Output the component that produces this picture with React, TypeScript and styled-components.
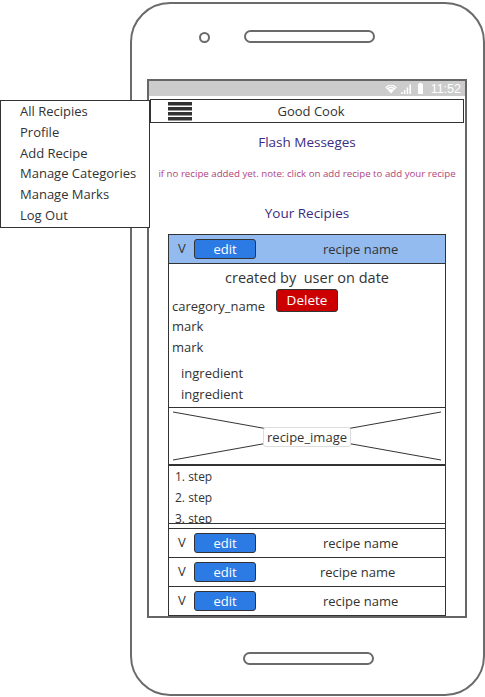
import styled, { createGlobalStyle } from "styled-components"

/**
 * Wireframe of the Good Cook app on a phone, with the side menu open
 */

const GlobalStyle = createGlobalStyle`
   html, body {
      margin: 0;
      padding: 0;
      background: #ffffff;
   }
   body {
      font-family: "Open Sans", "Noto Sans", sans-serif;
      color: #333333;
   }
`

const Page = styled.div`
   position: relative;
   width: 485px;
   height: 697px;
   overflow: hidden;
`

const Phone = styled.div`
   box-sizing: border-box;
   width: 355px;
   height: 694px;
   margin: 2px 0 0 130px;
   border: 2px solid #6b6b6b;
   border-radius: 40px;
   display: flex;
   flex-direction: column;
   align-items: flex-start;
`

const TopBezel = styled.div`
   height: 75px;
   width: 100%;
   display: flex;
   align-items: flex-start;
   padding: 26px 0 0 67px;
   box-sizing: border-box;
   gap: 34px;
`

const Camera = styled.div`
   width: 11px;
   height: 11px;
   margin-top: 2px;
   border: 2px solid #6b6b6b;
   border-radius: 50%;
   box-sizing: border-box;
`

const Pill = styled.div<{ $top?: number; $left?: number }>`
   box-sizing: border-box;
   width: 131px;
   height: 13px;
   margin-top: ${p => p.$top ?? 0}px;
   margin-left: ${p => p.$left ?? 0}px;
   border: 2px solid #6b6b6b;
   border-radius: 7px;
`

const Screen = styled.div`
   box-sizing: border-box;
   width: 320px;
   height: 539px;
   margin-left: 15px;
   border: 2px solid #666666;
   display: flex;
   flex-direction: column;
   overflow: hidden;
`

const StatusBar = styled.div`
   height: 15px;
   flex: none;
   background: #cccccc;
   display: flex;
   justify-content: flex-end;
   align-items: center;
   gap: 4px;
   padding-right: 4px;
   color: #ffffff;
   font-family: "Liberation Sans", Arial, sans-serif;
   font-size: 12.5px;
`

const Content = styled.div`
   padding: 3px 1px 0 1px;
   display: flex;
   flex-direction: column;
`

const Header = styled.div`
   box-sizing: border-box;
   height: 24px;
   border: 1px solid #333333;
   display: flex;
   align-items: center;
   padding-left: 17px;
`

const AppTitle = styled.span`
   flex: 1;
   text-align: center;
   font-size: 13px;
   padding-right: 33px;
`

const Heading = styled.div<{ $top: number }>`
   margin-top: ${p => p.$top}px;
   line-height: 20px;
   text-align: center;
   font-size: 13.5px;
   color: #3b2c80;
`

const Note = styled.div`
   margin-top: 12px;
   line-height: 20px;
   text-align: center;
   font-size: 9.7px;
   color: #b0447c;
   white-space: nowrap;
`

const Card = styled.div`
   box-sizing: border-box;
   width: 278px;
   margin: 11px 0 0 18px;
   border: 1px solid #333333;
   border-bottom: none;
   display: flex;
   flex-direction: column;
`

const RecipeRow = styled.div<{ $open?: boolean }>`
   height: 29px;
   box-sizing: border-box;
   border-bottom: 1px solid #333333;
   background: ${p => (p.$open ? "#93bbf0" : "#ffffff")};
   display: flex;
   align-items: center;
   padding-left: 9px;
   font-size: 13px;
   flex: none;
`

const Toggle = styled.span`
   width: 16px;
   margin-top: -2px;
`

const EditButton = styled.button`
   box-sizing: border-box;
   width: 62px;
   height: 20px;
   padding: 0;
   border: 1px solid #333333;
   border-radius: 3px;
   background: #2c7be5;
   color: #ffffff;
   font-family: inherit;
   font-size: 13px;
   line-height: 17px;
`

const RecipeName = styled.span<{ $gap: number }>`
   margin-left: ${p => p.$gap}px;
`

const Body = styled.div`
   border-bottom: 1px solid #333333;
   padding: 4px 0 2px 3px;
   font-size: 13px;
`

const CreatedBy = styled.div`
   line-height: 20px;
   text-align: center;
   font-size: 14.5px;
   white-space: pre;
   padding-right: 3px;
`

const CategoryRow = styled.div`
   display: flex;
   align-items: flex-start;
   margin-top: 1px;
   gap: 11px;
`

const Category = styled.span`
   margin-top: 7px;
   line-height: 20px;
`

const DeleteButton = styled.button`
   box-sizing: border-box;
   width: 62px;
   height: 23px;
   padding: 0;
   border: 1px solid #333333;
   border-radius: 3px;
   background: #cc0000;
   color: #ffffff;
   font-family: inherit;
   font-size: 13.5px;
   line-height: 19px;
`

const Line = styled.div<{ $indent?: number }>`
   line-height: 21px;
   padding-left: ${p => p.$indent ?? 0}px;
`

const Ingredients = styled.div`
   margin-top: 5px;
`

const ImageBox = styled.div`
   position: relative;
   height: 56px;
   border-bottom: 2px solid #333333;
   display: flex;
   align-items: center;
   justify-content: center;
   flex: none;
`

const Cross = styled.svg`
   position: absolute;
   inset: 0;
   width: 100%;
   height: 100%;
`

const ImageLabel = styled.span`
   position: relative;
   background: #ffffff;
   border: 1px solid #dddddd;
   border-radius: 3px;
   padding: 0 3px;
   line-height: 18px;
   font-size: 13px;
   margin-top: 1px;
`

const Steps = styled.div`
   height: 57px;
   overflow: hidden;
   border-bottom: 1px solid #333333;
   padding: 0 0 0 6px;
   font-size: 12px;
   flex: none;
`

const Spacer = styled.div`
   height: 4px;
   border-bottom: 1px solid #333333;
   flex: none;
`

const Menu = styled.div`
   position: absolute;
   left: 0;
   top: 100px;
   box-sizing: border-box;
   width: 150px;
   height: 128px;
   background: #ffffff;
   border: 1px solid #333333;
   padding-left: 19px;
   font-size: 13px;
`

const MenuItem = styled.div`
   line-height: 20.8px;
`

function Hamburger() {
   return (
      <svg width="24" height="19" viewBox="0 0 24 19">
         {[0, 5, 10, 15].map(y => (
            <rect key={y} x="0" y={y} width="24" height="3.5" fill="#333333" />
         ))}
      </svg>
   )
}

function StatusIcons() {
   return (
      <>
         <svg width="12" height="10" viewBox="0 0 12 10">
            <path d="M6 9.5 L0.3 3.2 A8 8 0 0 1 11.7 3.2 Z" fill="#ffffff" />
            <path d="M2 3.8 A5.6 5.6 0 0 1 10 3.8" stroke="#cccccc" strokeWidth="0.9" fill="none" />
            <path d="M3.6 5.6 A3.2 3.2 0 0 1 8.4 5.6" stroke="#cccccc" strokeWidth="0.9" fill="none" />
         </svg>
         <svg width="10" height="10" viewBox="0 0 10 10">
            <rect x="0" y="8" width="1.6" height="2" fill="#ffffff" />
            <rect x="2.8" y="6" width="1.6" height="4" fill="#ffffff" />
            <rect x="5.6" y="3.5" width="1.6" height="6.5" fill="#ffffff" />
            <rect x="8.4" y="0.5" width="1.6" height="9.5" fill="#ffffff" />
         </svg>
         <svg width="12" height="11" viewBox="0 0 12 11">
            <rect x="4" y="0" width="3" height="1" fill="#ffffff" />
            <rect x="3" y="1" width="5" height="10" fill="#ffffff" />
         </svg>
      </>
   )
}

const menuItems = ["All Recipies", "Profile", "Add Recipe", "Manage Categories", "Manage Marks", "Log Out"]

function Row({ open, gap = 67 }: { open?: boolean; gap?: number }) {
   return (
      <RecipeRow $open={open}>
         <Toggle>V</Toggle>
         <EditButton>edit</EditButton>
         <RecipeName $gap={gap}>recipe name</RecipeName>
      </RecipeRow>
   )
}

export default function App() {
   return (
      <Page>
         <GlobalStyle />
         <Phone>
            <TopBezel>
               <Camera />
               <Pill />
            </TopBezel>
            <Screen>
               <StatusBar>
                  <StatusIcons />
                  <span>11:52</span>
               </StatusBar>
               <Content>
                  <Header>
                     <Hamburger />
                     <AppTitle>Good Cook</AppTitle>
                  </Header>
                  <Heading $top={9}>Flash Messeges</Heading>
                  <Note>if no recipe added yet. note: click on add recipe to add your recipe</Note>
                  <Heading $top={19}>Your Recipies</Heading>
                  <Card>
                     <Row open />
                     <Body>
                        <CreatedBy>created by  user on date</CreatedBy>
                        <CategoryRow>
                           <Category>caregory_name</Category>
                           <DeleteButton>Delete</DeleteButton>
                        </CategoryRow>
                        <Line>mark</Line>
                        <Line>mark</Line>
                        <Ingredients>
                           <Line $indent={9}>ingredient</Line>
                           <Line $indent={9}>ingredient</Line>
                        </Ingredients>
                     </Body>
                     <ImageBox>
                        <Cross viewBox="0 0 276 56" preserveAspectRatio="none">
                           <line x1="4" y1="4" x2="272" y2="52" stroke="#333333" strokeWidth="1" />
                           <line x1="4" y1="52" x2="272" y2="4" stroke="#333333" strokeWidth="1" />
                        </Cross>
                        <ImageLabel>recipe_image</ImageLabel>
                     </ImageBox>
                     <Steps>
                        <Line>1. step</Line>
                        <Line>2. step</Line>
                        <Line>3. step</Line>
                     </Steps>
                     <Spacer />
                     <Row />
                     <Row gap={64} />
                     <Row />
                  </Card>
               </Content>
            </Screen>
            <Pill $top={34} $left={111} />
         </Phone>
         <Menu>
            {menuItems.map(item => (
               <MenuItem key={item}>{item}</MenuItem>
            ))}
         </Menu>
      </Page>
   )
}
